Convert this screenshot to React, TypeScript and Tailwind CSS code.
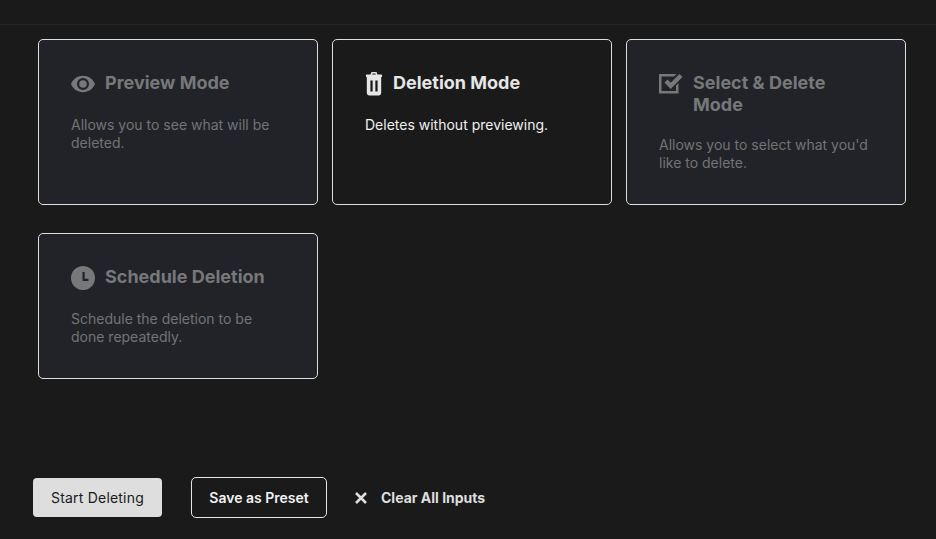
import type { ReactNode } from 'react';

function EyeIcon() {
  return (
    <svg viewBox="1 4.5 22 15" className="w-6 h-6 shrink-0" fill="currentColor">
      <path d="M12 4.5C7 4.500 2.730 7.610 1 12c1.730 4.390 6 7.500 11 7.500s9.270-3.110 11-7.500c-1.730-4.390-6-7.500-11-7.500zM12 17.500a5.500 5.500 0 1 1 0-11 5.500 5.500 0 0 1 0 11zm0-9a3.500 3.500 0 1 0 0 7 3.500 3.500 0 0 0 0-7z" fillRule="evenodd" />
    </svg>
  );
}

function TrashIcon() {
  return (
    <svg viewBox="-1 0 20 24" preserveAspectRatio="none" className="w-[18px] h-6 shrink-0" fill="currentColor">
      <path
        fillRule="evenodd"
        d="M6.200 0h5.600l1 2.600H17c.6 0 1 .4 1 1v1c0 .3-.2.5-.5.5H17v15.600c0 1.500-1.200 2.800-2.800 2.800H3.800C2.200 23.500 1 22.200 1 20.700V5.100H.5C.2 5.100 0 4.900 0 4.600v-1c0-.6.4-1 1-1h4.200zM7 2.600h4l-.4-1H7.400zM5 8.500v11h2.500v-11zm5.500 0v11H13v-11z"
      />
    </svg>
  );
}

function CheckIcon() {
  return (
    <svg viewBox="0 0 24 20" className="w-6 h-5 mt-[2px] shrink-0" fill="currentColor">
      <path d="M0 0h17.500l-2.500 2.500H2.500v14.500h14.500v-5.500l2.500-2.500v10.500H0z" />
      <path d="M5.500 8.500l3-3 3.200 3.200L20.500 0l3 3L11.700 15z" />
    </svg>
  );
}

function ClockIcon() {
  return (
    <svg viewBox="0 0 24 24" className="w-6 h-6 shrink-0">
      <circle cx="12" cy="12" r="12" fill="#77787a" />
      <path d="M11.500 6h2.200v6.800h3.800V15h-6z" fill="#222328" />
    </svg>
  );
}

interface ModeCardProps {
  title: string;
  description: string;
  icon: ReactNode;
  active?: boolean;
}

function ModeCard({ title, description, icon, active }: ModeCardProps) {
  return (
    <div
      className={`rounded-[5px] border border-[#dedede] p-8 ${
        active ? 'bg-[#1a1a1a]' : 'bg-[#222328]'
      }`}
    >
      <div className={`flex items-start gap-2.5 ${active ? 'text-[#e6e6e6]' : 'text-[#77787a]'}`}>
        {icon}
        <h3 className="text-[18px] leading-[22px] font-bold">{title}</h3>
      </div>
      <p
        className={`mt-5 text-[14px] leading-[18px] ${
          active ? 'text-[#f0f0f0]' : 'text-[#727376]'
        }`}
      >
        {description}
      </p>
    </div>
  );
}

export default function App() {
  return (
    <div
      className="flex flex-col w-[936px] h-[539px] overflow-hidden bg-[#1a1a1a]"
      style={{ fontFamily: 'Inter, "Liberation Sans", sans-serif' }}
    >
      <div className="h-[25px] shrink-0 border-b border-[#232323]" />

      <div className="grid grid-cols-3 gap-x-[14px] gap-y-[28px] pl-[38px] pr-[30px] pt-[14px]">
        <ModeCard
          title="Preview Mode"
          description="Allows you to see what will be deleted."
          icon={<EyeIcon />}
        />
        <ModeCard
          active
          title="Deletion Mode"
          description="Deletes without previewing."
          icon={<TrashIcon />}
        />
        <ModeCard
          title="Select & Delete Mode"
          description="Allows you to select what you'd like to delete."
          icon={<CheckIcon />}
        />
        <ModeCard
          title="Schedule Deletion"
          description="Schedule the deletion to be done repeatedly."
          icon={<ClockIcon />}
        />
      </div>

      <div className="mt-auto mb-[21px] flex items-center pl-[33px]">
        <button className="h-[39px] w-[129px] rounded-[4px] bg-[#dedede] text-[14px] tracking-[0.2px] text-[#1a1a1a]">
          Start Deleting
        </button>
        <button className="ml-[29px] h-[41px] w-[136px] rounded-[5px] border border-[#e6e6e6] text-[14px] font-semibold text-[#f2f2f2]">
          Save as Preset
        </button>
        <button className="ml-[27px] flex items-center gap-[13px] text-[14px] font-bold text-[#dedede]">
          <svg viewBox="0 0 14 14" className="w-3.5 h-3.5" stroke="currentColor" strokeWidth="2.6">
            <path d="M2 2l10 10M12 2L2 12" />
          </svg>
          Clear All Inputs
        </button>
      </div>
    </div>
  );
}
